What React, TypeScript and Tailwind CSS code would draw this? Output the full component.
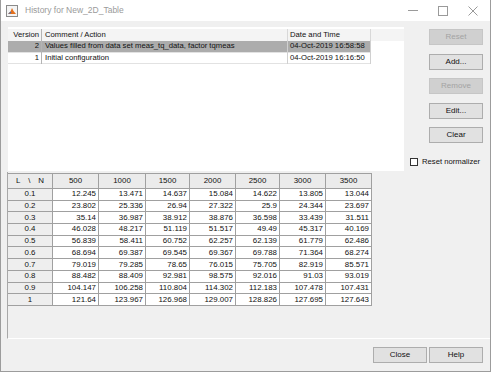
import React from 'react';

const font = { fontFamily: '"Liberation Sans", Arial, sans-serif' };

const cols = [
  { label: '500', w: 'w-[46px]' },
];

const colW = ['45px', '46px', '47px', '44px', '46px', '44px', '46px', '46px'];
const heads = ['500', '1000', '1500', '2000', '2500', '3000', '3500'];

const rows: [string, string[]][] = [
  ['0.1', ['12.245', '13.471', '14.637', '15.084', '14.622', '13.805', '13.044']],
  ['0.2', ['23.802', '25.336', '26.94', '27.322', '25.9', '24.344', '23.697']],
  ['0.3', ['35.14', '36.987', '38.912', '38.876', '36.598', '33.439', '31.511']],
  ['0.4', ['46.028', '48.217', '51.119', '51.517', '49.49', '45.317', '40.169']],
  ['0.5', ['56.839', '58.411', '60.752', '62.257', '62.139', '61.779', '62.486']],
  ['0.6', ['68.694', '69.387', '69.545', '69.367', '69.788', '71.364', '68.274']],
  ['0.7', ['79.019', '79.285', '78.65', '76.015', '75.705', '82.919', '85.571']],
  ['0.8', ['88.482', '88.409', '92.981', '98.575', '92.016', '91.03', '93.019']],
  ['0.9', ['104.147', '106.258', '110.804', '114.302', '112.183', '107.478', '107.431']],
  ['1', ['121.64', '123.967', '126.968', '129.007', '128.826', '127.695', '127.643']],
];

const history = [
  { v: '2', c: 'Values filled from data set meas_tq_data, factor tqmeas', d: '04-Oct-2019 16:58:58', sel: true },
  { v: '1', c: 'Initial configuration', d: '04-Oct-2019 16:16:50', sel: false },
];

const Btn: React.FC<{ label: string; disabled?: boolean; className?: string }> = ({ label, disabled, className }) => (
  <div
    className={
      'flex h-[16px] w-[54px] items-center justify-center border text-[8px] leading-none ' +
      (disabled ? 'border-[#c6c6c6] bg-[#d0d0d0] text-[#a3a3a3] ' : 'border-[#adadad] bg-[#e1e1e1] text-[#111] ') +
      (className ?? '')
    }
  >
    {label}
  </div>
);

const MatlabIcon = () => (
  <svg width="12" height="12" viewBox="0 0 12 12">
    <rect x="0.5" y="0.5" width="11" height="11" fill="#f4f4f4" stroke="#8a8a8a" />
    <path d="M2 9 L4.5 6.5 L6 3 L7.5 6 L10 9 Z" fill="#e5701c" />
    <path d="M2 9 L4.5 6.5 L5.5 8 Z" fill="#3b6fb6" />
  </svg>
);

export default function App() {
  return (
    <div
      style={font}
      className="flex h-[372px] w-[491px] flex-col border-x border-b border-[#9c9c9c] bg-[#f0f0f0] text-[#111]"
    >
      {/* title bar */}
      <div className="flex h-[21px] shrink-0 items-center bg-white pl-[5px] pr-[2px]">
        <MatlabIcon />
        <span className="ml-[7px] text-[8.5px] text-[#9a9a9a]">History for New_2D_Table</span>
        <div className="ml-auto flex h-full text-[#8f8f8f]">
          <div className="flex w-[30px] items-center justify-center">
            <div className="h-px w-[10px] bg-[#9a9a9a]" />
          </div>
          <div className="flex w-[30px] items-center justify-center">
            <div className="h-[10px] w-[10px] border border-[#9a9a9a]" />
          </div>
          <div className="flex w-[30px] items-center justify-center">
            <svg width="10" height="10" viewBox="0 0 10 10">
              <path d="M0.5 0.5 L9.5 9.5 M9.5 0.5 L0.5 9.5" stroke="#9a9a9a" strokeWidth="1" />
            </svg>
          </div>
        </div>
      </div>

      {/* history list + side buttons */}
      <div className="mt-[6px] flex h-[144px] shrink-0">
        <div className="ml-[7px] h-full w-[396px] bg-white pt-[2px] text-[7.7px]">
          <div className="flex h-[12px] items-center bg-[#f4f4f4]">
            <div className="w-[34px] border-r border-[#b4b4b4] pr-[2px] text-right">Version</div>
            <div className="w-[246px] border-r border-[#d8d8d8] pl-[3px]">Comment / Action</div>
            <div className="w-[83px] border-r border-[#d8d8d8] pl-[2px]">Date and Time</div>
          </div>
          {history.map((h) => (
            <div
              key={h.v}
              className={'flex h-[11.5px] w-[363px] items-center border-b border-[#e2e2e2] ' + (h.sel ? 'bg-[#acacac]' : 'bg-white')}
            >
              <div className="w-[34px] border-r border-[#b4b4b4] pr-[2px] text-right">{h.v}</div>
              <div className="w-[246px] border-r border-[#d0d0d0] pl-[3px] whitespace-nowrap">{h.c}</div>
              <div className="w-[83px] border-r border-[#d0d0d0] pl-[2px] whitespace-nowrap">{h.d}</div>
            </div>
          ))}
        </div>
        <div className="ml-[4px] flex w-[75px] flex-col items-end pt-[2px]">
          <Btn label="Reset" disabled />
          <Btn label="Add..." className="mt-[9px]" />
          <Btn label="Remove" disabled className="mt-[8px]" />
          <Btn label="Edit..." className="mt-[9px]" />
          <Btn label="Clear" className="mt-[8px]" />
          <div className="mt-[13px] flex items-center self-start pl-[2px] text-[7.7px]">
            <div className="h-[8px] w-[8px] border border-[#333] bg-white" />
            <span className="ml-[4px] whitespace-nowrap">Reset normalizer</span>
          </div>
        </div>
      </div>

      {/* data table */}
      <div className="ml-[6px] mt-[1px] h-[167px] shrink-0 border-b border-l border-b-white border-l-[#a8a8a8] pt-[1px]">
        <div
          className="grid w-max border-t border-[#a0a0a0] text-[7.9px] leading-none"
          style={{ gridTemplateColumns: colW.join(' '), gridTemplateRows: '15px repeat(10, 11.7px)' }}
        >
          <div className="flex items-center justify-between border-b border-r border-[#a0a0a0] bg-[#ebebeb] px-[8px]">
            <span>L</span>
            <span>\</span>
            <span>N</span>
          </div>
          {heads.map((h) => (
            <div key={h} className="flex items-center justify-center border-b border-r border-[#a0a0a0] bg-[#ebebeb]">
              {h}
            </div>
          ))}
          {rows.map(([l, vals]) => (
            <React.Fragment key={l}>
              <div className="flex items-center justify-center border-b border-r border-[#a0a0a0] bg-[#eeeeee]">{l}</div>
              {vals.map((v, i) => (
                <div key={i} className="flex items-center justify-end border-b border-r border-[#a0a0a0] bg-white pr-[2px]">
                  {v}
                </div>
              ))}
            </React.Fragment>
          ))}
        </div>
      </div>

      {/* bottom buttons */}
      <div className="mt-[8px] flex justify-end gap-[2px] pr-[7px]">
        <Btn label="Close" />
        <Btn label="Help" />
      </div>
    </div>
  );
}
